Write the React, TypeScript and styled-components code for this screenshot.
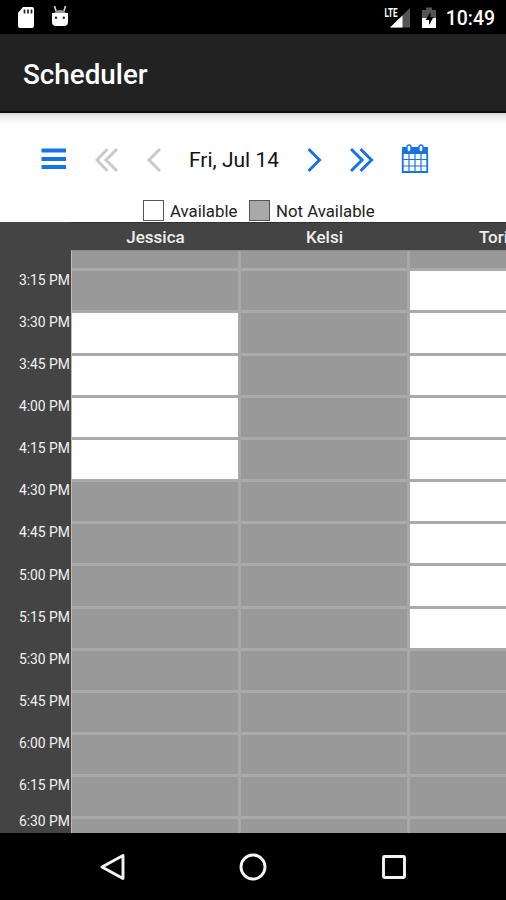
import React from "react";
import styled, { createGlobalStyle } from "styled-components";

const GlobalStyle = createGlobalStyle`
  * { box-sizing: border-box; }
  body { margin: 0; background: #000; font-family: Roboto, "Liberation Sans", sans-serif; }
`;

const ROW = 42.17;

const Screen = styled.div`
  width: 506px;
  height: 900px;
  display: flex;
  flex-direction: column;
  overflow: hidden;
  background: #fff;
`;

const StatusBar = styled.header`
  flex: none;
  height: 34px;
  display: flex;
  align-items: center;
  padding: 0 11px 0 17px;
  background: #000;
  color: #fff;
`;

const StatusIcon = styled.svg<{ $gap: number }>`
  flex: none;
  margin-right: ${(p) => p.$gap}px;
`;

const Spacer = styled.div`
  flex: 1;
`;

const Clock = styled.span`
  font-size: 19.4px;
  font-weight: 500;
  line-height: 34px;
  padding-top: 3px;
`;

const AppBar = styled.div`
  flex: none;
  height: 79px;
  padding-left: 23px;
  background: #222;
  border-bottom: 2px solid #0c0c0c;
  color: #fff;
  font-size: 27.8px;
  font-weight: 500;
  line-height: 81px;
`;

const Controls = styled.section`
  flex: none;
  height: 109px;
  display: flex;
  flex-direction: column;
  background: linear-gradient(#d8d8d8, #e9e9e9 3px, #fafafa 9px, #fff 13px);
`;

const Toolbar = styled.div`
  display: flex;
  align-items: center;
  height: 83px;
  padding: 11px 0 0 41px;
`;

const ToolButton = styled.button<{ $width: number; $gap: number; $muted?: boolean }>`
  display: flex;
  flex: none;
  width: ${(p) => p.$width}px;
  height: 32px;
  margin: 0 ${(p) => p.$gap}px 0 0;
  padding: 0;
  border: 0;
  background: none;
  color: ${(p) => (p.$muted ? "#c9c9c9" : "#1673e6")};
`;

const DateLabel = styled.span`
  width: 118px;
  font-size: 21px;
  line-height: 32px;
  color: #111;
  white-space: nowrap;
`;

const Legend = styled.div`
  display: flex;
  align-items: center;
  height: 26px;
  padding: 2px 0 0 143px;
  font-size: 16.8px;
  color: #222;
`;

const Swatch = styled.span<{ $filled?: boolean }>`
  width: 21px;
  height: 21px;
  margin-right: 6px;
  border: 1.5px solid #555;
  background: ${(p) => (p.$filled ? "#a9a9a9" : "#fff")};
`;

const LegendText = styled.span<{ $width: number }>`
  width: ${(p) => p.$width}px;
  padding-top: 1px;
  white-space: nowrap;
`;

const Calendar = styled.main`
  flex: none;
  height: 611px;
  display: grid;
  grid-template-columns: 71px 435px;
  grid-template-rows: 28px 583px;
  background: #444;
  overflow: hidden;
`;

const PeopleRow = styled.div`
  grid-column: 2;
  display: flex;
  overflow: hidden;
  border-top: 1px solid #303030;
`;

const Person = styled.div`
  flex: 0 0 169px;
  font-size: 17px;
  font-weight: 500;
  line-height: 28px;
  text-align: center;
  color: #efefef;
`;

const TimeColumn = styled.div`
  display: flex;
  flex-direction: column;
  padding: 18.5px 1px 0 0;
  overflow: hidden;
`;

const TimeLabel = styled.div<{ $last?: boolean }>`
  flex: none;
  height: ${(p) => (p.$last ? 15 : ROW)}px;
  font-size: 13.9px;
  line-height: ${(p) => (p.$last ? 8 : 22)}px;
  text-align: right;
  color: #f2f2f2;
  white-space: nowrap;
`;

const Columns = styled.div`
  display: flex;
  overflow: hidden;
  border-left: 1px solid #bbb;
  border-top: 1px solid #8b8b8b;
`;

const Column = styled.div<{ $width: number }>`
  flex: 0 0 ${(p) => p.$width}px;
  border-right: 3px solid #a8a8a8;
`;

const Slot = styled.div<{ $open?: boolean; $first?: boolean }>`
  height: ${(p) => (p.$first ? 17.3 : ROW)}px;
  border-top: ${(p) => (p.$first ? 0 : 3)}px solid #aaa;
  background: ${(p) => (p.$open ? "#fff" : "#999")};
`;

const NavBar = styled.nav`
  flex: none;
  height: 67px;
  display: flex;
  justify-content: center;
  align-items: center;
  gap: 112.5px;
  background: #000;
`;

const NavIcon = styled.svg`
  flex: none;
  fill: none;
  stroke: #f4f4f4;
  stroke-width: 2.9;
`;

const times = [
  "3:15 PM", "3:30 PM", "3:45 PM", "4:00 PM", "4:15 PM", "4:30 PM", "4:45 PM",
  "5:00 PM", "5:15 PM", "5:30 PM", "5:45 PM", "6:00 PM", "6:15 PM", "6:30 PM",
];

const people = [
  { name: "Jessica", width: 169, from: 1, to: 5 },
  { name: "Kelsi", width: 169, from: 0, to: 0 },
  { name: "Tori", width: 169, from: 0, to: 9 },
];

const Chevron = ({ width, d, weight = 3 }: { width: number; d: string; weight?: number }) => (
  <svg width={width} height="32" viewBox={`0 0 ${width} 32`} fill="none" stroke="currentColor" strokeWidth={weight}>
    <path d={d} />
  </svg>
);

export default function App() {
  return (
    <Screen>
      <GlobalStyle />
      <StatusBar>
        <StatusIcon $gap={16} width="18" height="22" viewBox="0 0 18 22">
          <path d="M6 1h9q2 0 2 2v17q0 2-2 2H3q-2 0-2-2V7z" fill="#fff" />
          <path d="M7.5 3.5v4M11 3.5v4M14.5 3.5v4" stroke="#222" strokeWidth="1.7" />
        </StatusIcon>
        <StatusIcon $gap={0} width="18" height="22" viewBox="0 0 18 22">
          <path d="M3.5 0l1.500 5M14.500 0L13 5" stroke="#ccc" strokeWidth="1.7" />
          <path d="M3.500 7q1-3 5.500-3t5.500 3z" fill="#999" />
          <path d="M1 7h16v9q0 4-4 4H5q-4 0-4-4z" fill="#fff" />
          <circle cx="5" cy="11.8" r="1.2" fill="#222" />
          <circle cx="12.8" cy="11.8" r="1.2" fill="#222" />
        </StatusIcon>
        <Spacer />
        <StatusIcon $gap={10} width="27" height="24" viewBox="0 0 27 24">
          <path d="M26 3v19.5H6z" fill="#555" />
          <path d="M18.5 10.500v12H6z" fill="#fff" />
          <path d="M0 1h14v11.500H0z" fill="#000" />
          <text x="0.5" y="11.5" fontSize="13.5" fontWeight="700" fill="#fff" textLength="13" lengthAdjust="spacingAndGlyphs">LTE</text>
        </StatusIcon>
        <StatusIcon $gap={8} width="17" height="24" viewBox="0 0 17 24">
          <path d="M5 2.5h6V5h4v18H1V5h4z" fill="#555" />
          <path d="M1 13h14v10H1z" fill="#fff" />
          <path d="M9.5 7L4.5 15H8v5l4.5-8H9.5z" fill="#000" />
        </StatusIcon>
        <Clock>10:49</Clock>
      </StatusBar>
      <AppBar>Scheduler</AppBar>
      <Controls>
        <Toolbar>
          <ToolButton $width={25} $gap={29} aria-label="Menu">
            <Chevron width={25} weight={4} d="M.5 6.500H25M.5 15H25M.5 23H25" />
          </ToolButton>
          <ToolButton $width={24} $gap={27} $muted aria-label="Previous week">
            <Chevron width={24} d="M12.500 5L2 16l10.500 11M22 5L11 16l11 11" />
          </ToolButton>
          <ToolButton $width={16} $gap={27} $muted aria-label="Previous day">
            <Chevron width={16} d="M14 5L3 16l11 11" />
          </ToolButton>
          <DateLabel>Fri, Jul 14</DateLabel>
          <ToolButton $width={16} $gap={27} aria-label="Next day">
            <Chevron width={16} d="M1.500 5l11 11-11 11" />
          </ToolButton>
          <ToolButton $width={24} $gap={27} aria-label="Next week">
            <Chevron width={24} d="M1 5l11 11L1 27M10.500 5l11 11-11 11" />
          </ToolButton>
          <ToolButton $width={28} $gap={0} aria-label="Pick a date">
            <svg width="28" height="32" viewBox="0 0 28 32" fill="none" stroke="currentColor">
              <path d="M1 3h26v7H1z" fill="currentColor" stroke="none" />
              <path d="M2 15.500h24M2 22h24M8 10v18M14 10v18M20 10v18" strokeWidth="1.200" />
              <path d="M1.750 9v19h24.500V9" strokeWidth="1.800" />
              <rect x="6" y="1" width="4" height="7" rx="2" fill="#fff" strokeWidth="1.400" />
              <rect x="18" y="1" width="4" height="7" rx="2" fill="#fff" strokeWidth="1.400" />
            </svg>
          </ToolButton>
        </Toolbar>
        <Legend>
          <Swatch />
          <LegendText $width={79}>Available</LegendText>
          <Swatch $filled />
          <LegendText $width={110}>Not Available</LegendText>
        </Legend>
      </Controls>
      <Calendar>
        <PeopleRow>
          {people.map((p) => <Person key={p.name}>{p.name}</Person>)}
        </PeopleRow>
        <TimeColumn>
          {times.map((t, i) => <TimeLabel key={t} $last={i === times.length - 1}>{t}</TimeLabel>)}
        </TimeColumn>
        <Columns>
          {people.map((p) => (
            <Column key={p.name} $width={p.width}>
              <Slot $first />
              {times.map((t, i) => <Slot key={t} $open={i >= p.from && i < p.to} />)}
            </Column>
          ))}
        </Columns>
      </Calendar>
      <NavBar>
        <NavIcon width="28" height="28" viewBox="0 0 28 28"><path d="M24 2.500v23L3 14z" strokeLinejoin="round" /></NavIcon>
        <NavIcon width="28" height="28" viewBox="0 0 28 28"><circle cx="14" cy="14" r="12" /></NavIcon>
        <NavIcon width="28" height="28" viewBox="0 0 28 28"><rect x="3.500" y="3.500" width="21" height="21" rx="1" /></NavIcon>
      </NavBar>
    </Screen>
  );
}
